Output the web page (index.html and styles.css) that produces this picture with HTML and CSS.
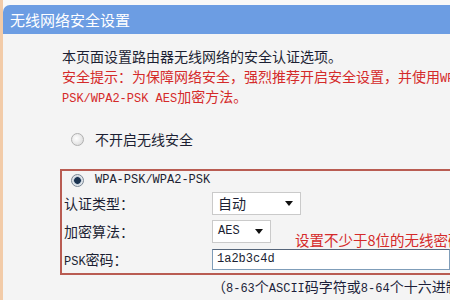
FILE: index.html
```html
<!DOCTYPE html>
<html lang="zh-CN">
<head>
  <meta charset="UTF-8">
  <title>无线网络安全设置</title>
  <link rel="stylesheet" href="styles.css">
</head>
<body>
  <div class="frame">
    <div class="title-bar">无线网络安全设置</div>

    <div class="content">
      <p class="intro">本页面设置路由器无线网络的安全认证选项。</p>
      <p class="warn">安全提示：为保障网络安全，强烈推荐开启安全设置，并使用<span class="en">WPA-</span><br><span class="en">PSK/WPA2-PSK AES</span>加密方法。</p>

      <div class="option option-off">
        <span class="radio"></span>
        <span>不开启无线安全</span>
      </div>

      <div class="box">
        <div class="option">
          <span class="radio on"></span>
          <span class="en">WPA-PSK/WPA2-PSK</span>
        </div>
        <div class="field">
          <label>认证类型：</label>
          <div class="select wide"><span>自动</span><i class="arrow"></i></div>
        </div>
        <div class="field">
          <label>加密算法：</label>
          <div class="select narrow"><span class="en">AES</span><i class="arrow"></i></div>
          <span class="hint">设置不少于8位的无线密码</span>
        </div>
        <div class="field">
          <label><span class="en">PSK</span>密码：</label>
          <div class="text-input en">1a2b3c4d</div>
        </div>
      </div>

      <p class="note">（<span class="en">8-63</span>个<span class="en">ASCII</span>码字符或<span class="en">8-64</span>个十六进制字符）</p>
    </div>
  </div>
</body>
</html>
```

FILE: styles.css
```css
body { margin: 0; background: #f8f8f8; font-family: "Noto Sans CJK SC", sans-serif; font-size: 14px; color: #1c1f33; overflow: hidden; }
.frame { border-left: 3px solid #f2cba8; height: 300px; white-space: nowrap; overflow: hidden; }
.title-bar { height: 29px; margin-top: 5px; padding-left: 7px; line-height: 29px; font-size: 15px; color: #fff; background: #6c9de3; border-top-left-radius: 7px; }
.content { background: #f4f4f4; padding: 12px 0 0 59px; height: 300px; }
.intro, .warn { margin: 0; height: 20px; line-height: 20px; }
.warn { height: 40px; color: #d42a2a; }
.en { font-family: "Liberation Mono", monospace; font-size: 12px; line-height: 1; }

.option { display: flex; align-items: center; gap: 11px; height: 18px; margin-left: 7px; }
.option-off { height: 20px; margin: 23px 0 0 9px; }
.radio { width: 13px; height: 13px; flex-shrink: 0; box-sizing: border-box; border-radius: 50%; border: 1px solid #b0b0b0; background: radial-gradient(circle at 40% 40%, #ffffff, #d4d4d4); }
.radio.on { border-color: #7b8896; background: radial-gradient(circle, #1b3350 0 3px, #9fb0c2 3.6px, #e6eaee 4.5px, #c6ccd3 100%); }

.box { margin: 20px 0 0 -2px; padding-left: 2px; border: 2px solid #b95c52; border-right: none; }
.field { display: flex; align-items: center; height: 28px; }
.field label { width: 148px; flex-shrink: 0; line-height: 20px; }
.select { display: flex; align-items: center; justify-content: space-between; flex-shrink: 0; height: 23px; box-sizing: border-box; padding: 0 7px 0 5px; line-height: 20px; background: #fff; border: 1px solid #cacaca; }
.select.wide { width: 89px; }
.select.narrow { width: 59px; }
.arrow { width: 0; height: 0; border-left: 4px solid transparent; border-right: 4px solid transparent; border-top: 5px solid #111; }
.hint { margin-left: 24px; position: relative; top: 9px; line-height: 20px; font-size: 14.5px; color: #d42a2a; }
.text-input { flex: 1; height: 21px; line-height: 19px; box-sizing: border-box; padding-left: 4px; background: #fff; border: 1px solid #7f9db9; border-top-color: #55657a; }

.note { margin: 1px 0 0 150px; line-height: 20px; color: #1c1f3a; }
```
